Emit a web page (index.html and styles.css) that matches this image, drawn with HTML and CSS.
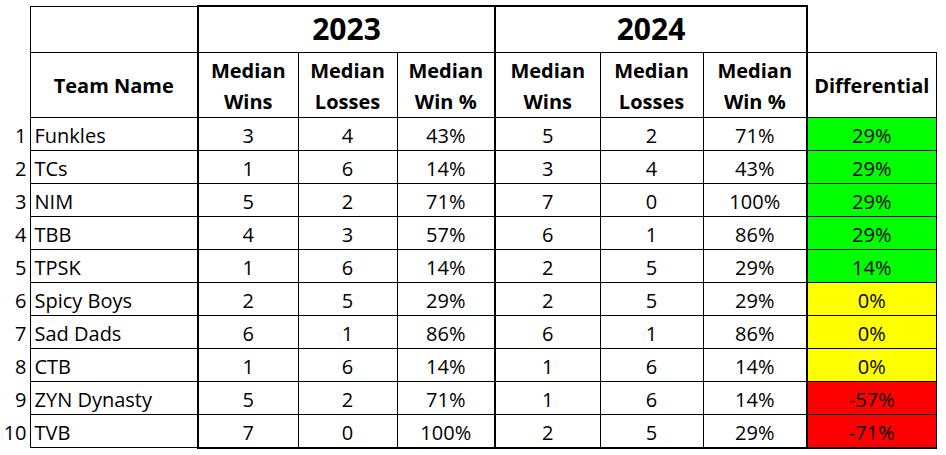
FILE: index.html
```html
<!DOCTYPE html>
<html>
<head>
<meta charset="utf-8">
<link rel="stylesheet" href="styles.css">
</head>
<body>
<table class="sheet">
  <colgroup>
    <col class="c-num">
    <col class="c-team">
    <col class="c-w23">
    <col class="c-l23">
    <col class="c-p23">
    <col class="c-w24">
    <col class="c-l24">
    <col class="c-p24">
    <col class="c-diff">
  </colgroup>
  <tr class="year-row">
    <td class="num"></td>
    <td class="team-top"></td>
    <td class="year y-first" colspan="3">2023</td>
    <td class="year y-second" colspan="3">2024</td>
    <td class="empty"></td>
  </tr>
  <tr class="head-row">
    <td class="num"></td>
    <th class="team-head">Team Name</th>
    <th class="b-left">Median<br>Wins</th>
    <th>Median<br>Losses</th>
    <th>Median<br>Win %</th>
    <th class="b-left">Median<br>Wins</th>
    <th>Median<br>Losses</th>
    <th class="b-right">Median<br>Win %</th>
    <th class="diff-head">Differential</th>
  </tr>
  <tr><td class="num">1</td><td class="team">Funkles</td><td class="b-left">3</td><td>4</td><td>43%</td><td class="b-left">5</td><td>2</td><td class="b-right">71%</td><td class="diff pos">29%</td></tr>
  <tr><td class="num">2</td><td class="team">TCs</td><td class="b-left">1</td><td>6</td><td>14%</td><td class="b-left">3</td><td>4</td><td class="b-right">43%</td><td class="diff pos">29%</td></tr>
  <tr><td class="num">3</td><td class="team">NIM</td><td class="b-left">5</td><td>2</td><td>71%</td><td class="b-left">7</td><td>0</td><td class="b-right">100%</td><td class="diff pos">29%</td></tr>
  <tr><td class="num">4</td><td class="team">TBB</td><td class="b-left">4</td><td>3</td><td>57%</td><td class="b-left">6</td><td>1</td><td class="b-right">86%</td><td class="diff pos">29%</td></tr>
  <tr><td class="num">5</td><td class="team">TPSK</td><td class="b-left">1</td><td>6</td><td>14%</td><td class="b-left">2</td><td>5</td><td class="b-right">29%</td><td class="diff pos">14%</td></tr>
  <tr><td class="num">6</td><td class="team">Spicy Boys</td><td class="b-left">2</td><td>5</td><td>29%</td><td class="b-left">2</td><td>5</td><td class="b-right">29%</td><td class="diff zero">0%</td></tr>
  <tr><td class="num">7</td><td class="team">Sad Dads</td><td class="b-left">6</td><td>1</td><td>86%</td><td class="b-left">6</td><td>1</td><td class="b-right">86%</td><td class="diff zero">0%</td></tr>
  <tr><td class="num">8</td><td class="team">CTB</td><td class="b-left">1</td><td>6</td><td>14%</td><td class="b-left">1</td><td>6</td><td class="b-right">14%</td><td class="diff zero">0%</td></tr>
  <tr><td class="num">9</td><td class="team">ZYN Dynasty</td><td class="b-left">5</td><td>2</td><td>71%</td><td class="b-left">1</td><td>6</td><td class="b-right">14%</td><td class="diff neg">-57%</td></tr>
  <tr class="last-row"><td class="num">10</td><td class="team">TVB</td><td class="b-left">7</td><td>0</td><td>100%</td><td class="b-left">2</td><td>5</td><td class="b-right">29%</td><td class="diff neg">-71%</td></tr>
</table>
</body>
</html>
```

FILE: styles.css
```css
html, body {
  margin: 0;
  padding: 0;
  background: #ffffff;
}

body {
  font-family: "Open Sans", "Liberation Sans", sans-serif;
  font-size: 20px;
  color: #000000;
}

.sheet {
  border-collapse: collapse;
  table-layout: fixed;
  width: 936px;
  margin-top: 5px;
}

.c-num { width: 30px; }
.c-team { width: 168px; }
.c-w23 { width: 100px; }
.c-l23 { width: 99px; }
.c-p23 { width: 98px; }
.c-w24 { width: 105px; }
.c-l24 { width: 103px; }
.c-p24 { width: 104px; }
.c-diff { width: 129px; }

.sheet td,
.sheet th {
  border: 1px solid #000000;
  padding: 4px 4px 0;
  text-align: center;
  font-weight: 400;
  white-space: nowrap;
  line-height: 28px;
  vertical-align: middle;
}

.sheet tr { height: 33px; }
.sheet .year-row { height: 46px; }
.sheet .head-row { height: 65px; }

.sheet td.num {
  border: none;
  text-align: right;
  padding: 4px 3px 0 0;
}

.sheet td.team-top {
  border-bottom: 1px solid #000;
}

.sheet td.year {
  font-size: 30px;
  font-weight: 700;
  border: 2px solid #000;
  border-bottom: 1px solid #000;
  padding-top: 0;
  line-height: 40px;
}

.sheet td.empty {
  border: none;
  border-left: 2px solid #000;
}

.sheet th {
  font-weight: 700;
  line-height: 31px;
  padding-top: 2px;
}

.sheet .team {
  text-align: left;
}

.sheet .b-left { border-left: 2px solid #000; }
.sheet .b-right { border-right: 2px solid #000; }

.sheet .last-row td { border-bottom: 2px solid #000; }
.sheet .last-row td.team { border-bottom: 1px solid #000; }
.sheet .last-row td.num { border: none; }

.sheet .diff.pos { background: #00ff00; }
.sheet .diff.zero { background: #ffff00; }
.sheet .diff.neg { background: #ff0000; }
```
